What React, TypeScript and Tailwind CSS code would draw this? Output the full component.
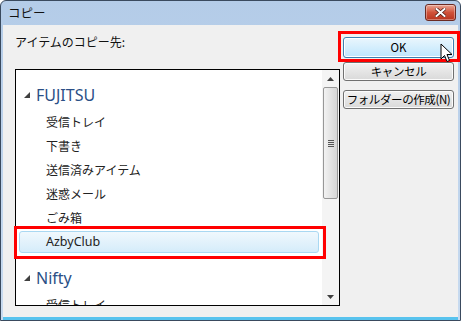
import React from 'react';

const jp = { fontFamily: '"Noto Sans CJK JP", "Noto Sans", sans-serif' };
const ui = { fontFamily: '"Segoe UI", "Noto Sans", "Noto Sans CJK JP", sans-serif' };

const fujitsu = ['受信トレイ', '下書き', '送信済みアイテム', '迷惑メール', 'ごみ箱'];

function Arrow() {
    return (
        <svg width="6" height="6" viewBox="0 0 6 6" className="shrink-0">
            <path d="M6 0 L6 6 L0 6 Z" fill="#404040" />
        </svg>
    );
}

function Header({ name }: { name: string }) {
    return (
        <div className="flex h-[31px] shrink-0 items-center pl-[8px]">
            <Arrow />
            <span className="ml-[6px] text-[16px] leading-none text-[#2b4f86]" style={ui}>{name}</span>
        </div>
    );
}

function Item({ name }: { name: string }) {
    return (
        <div className="flex h-[24px] shrink-0 items-center pl-[30px] text-[12px] text-[#222]" style={jp}>
            {name}
        </div>
    );
}

function Btn({ label, primary }: { label: string; primary?: boolean }) {
    return (
        <button
            type="button"
            className={
                primary
                    ? 'h-[21px] w-[111px] whitespace-nowrap rounded-[3px] border border-[#3c7fb1] bg-gradient-to-b from-[#eaf6fd] to-[#bee6fd] text-[11.5px] leading-none text-black shadow-[inset_0_0_0_1px_#fff]'
                    : 'h-[19px] w-[111px] whitespace-nowrap rounded-[3px] border border-[#707070] bg-gradient-to-b from-[#f2f2f2] to-[#d9d9d9] text-[11.5px] leading-none tracking-[-0.4px] text-black shadow-[inset_0_0_0_1px_#fbfbfb]'
            }
            style={jp}
        >
            {label}
        </button>
    );
}

export default function App() {
    return (
        <div className="flex h-[321px] w-[461px] flex-col overflow-hidden rounded-t-[6px] border border-[#3a4a5e] bg-gradient-to-b from-[#b4cce8] to-[#c8dbf0]">
            {/* title bar */}
            <div className="flex h-[24px] shrink-0 items-center justify-between pl-[7px] pr-[4px]">
                <span className="text-[12.5px] text-[#111]" style={jp}>コピー</span>
                <div className="mb-[2px] flex h-[17px] w-[31px] items-center justify-center rounded-[3px] border border-[#6b2a22] bg-gradient-to-b from-[#e8a493] via-[#d0523a] to-[#b8341f] shadow-[inset_0_0_0_1px_rgba(255,255,255,0.35)]">
                    <svg width="11" height="9" viewBox="0 0 11 9">
                        <path d="M1.5 1 L9.5 8 M9.5 1 L1.5 8" stroke="#4a1a14" strokeWidth="3.4" strokeLinecap="square" />
                        <path d="M1.5 1 L9.5 8 M9.5 1 L1.5 8" stroke="#fff" strokeWidth="2" strokeLinecap="square" />
                    </svg>
                </div>
            </div>

            {/* client */}
            <div className="relative mx-[2px] flex flex-1 border-b-[3px] border-[#58c3ee] bg-[#f0f0f0]">
                <div className="flex flex-1 flex-col pl-[12px] pt-[10px]">
                    <span className="text-[12px] leading-[14px] text-[#111]" style={jp}>アイテムのコピー先:</span>
                    <div className="mt-[20px] flex h-[237px] w-[325px] overflow-hidden border border-black bg-white">
                        <div className="flex flex-1 flex-col pt-[9px]">
                            <Header name="FUJITSU" />
                            {fujitsu.map((n) => (
                                <Item key={n} name={n} />
                            ))}
                            <div className="mx-[3px] my-[1px] flex h-[22px] shrink-0 items-center rounded-[3px] border border-[#a9d8f2] bg-gradient-to-b from-[#f0f8fd] to-[#d5ecfa] pl-[26px] text-[12.5px] text-[#222]" style={ui}>
                                AzbyClub
                            </div>
                            <div className="h-[8px] shrink-0" />
                            <Header name="Nifty" />
                            <Item name="受信トレイ" />
                        </div>
                        {/* scrollbar */}
                        <div className="flex w-[17px] flex-col bg-[#f4f4f4]">
                            <div className="flex h-[17px] items-center justify-center">
                                <svg width="7" height="4" viewBox="0 0 7 4"><path d="M0 4 L3.5 0 L7 4 Z" fill="#404040" /></svg>
                            </div>
                            <div className="mx-[1px] flex h-[112px] items-center justify-center rounded-[2px] border border-[#979797] bg-gradient-to-r from-[#f2f2f2] to-[#d6d6d6]">
                                <div className="flex flex-col gap-[1px]">
                                    <div className="h-px w-[6px] bg-[#555]" />
                                    <div className="h-px w-[6px] bg-[#555]" />
                                    <div className="h-px w-[6px] bg-[#555]" />
                                    <div className="h-px w-[6px] bg-[#555]" />
                                </div>
                            </div>
                            <div className="flex-1" />
                            <div className="flex h-[17px] items-center justify-center">
                                <svg width="7" height="4" viewBox="0 0 7 4"><path d="M0 0 L7 0 L3.5 4 Z" fill="#404040" /></svg>
                            </div>
                        </div>
                    </div>
                </div>

                {/* buttons */}
                <div className="flex w-[115px] flex-col gap-[4px] pt-[12px]">
                    <Btn label="OK" primary />
                    <Btn label="キャンセル" />
                    <div className="h-[1px]" />
                    <Btn label="フォルダーの作成(N)" />
                </div>

                {/* highlight boxes */}
                <div className="pointer-events-none absolute left-[335px] top-[6px] h-[31px] w-[122px] border-[3px] border-[#ff0000]" />
                <div className="pointer-events-none absolute left-[11px] top-[201px] h-[33px] w-[312px] border-[3px] border-[#ff0000]" />

                {/* mouse cursor */}
                <svg className="pointer-events-none absolute left-[437px] top-[18px]" width="14" height="21" viewBox="0 0 14 21">
                    <path d="M1 1 L1 16 L4.5 12.5 L7 18.5 L9.5 17.5 L7 11.5 L12 11.5 Z" fill="#fff" stroke="#000" strokeWidth="1" strokeLinejoin="round" />
                </svg>
            </div>
        </div>
    );
}
